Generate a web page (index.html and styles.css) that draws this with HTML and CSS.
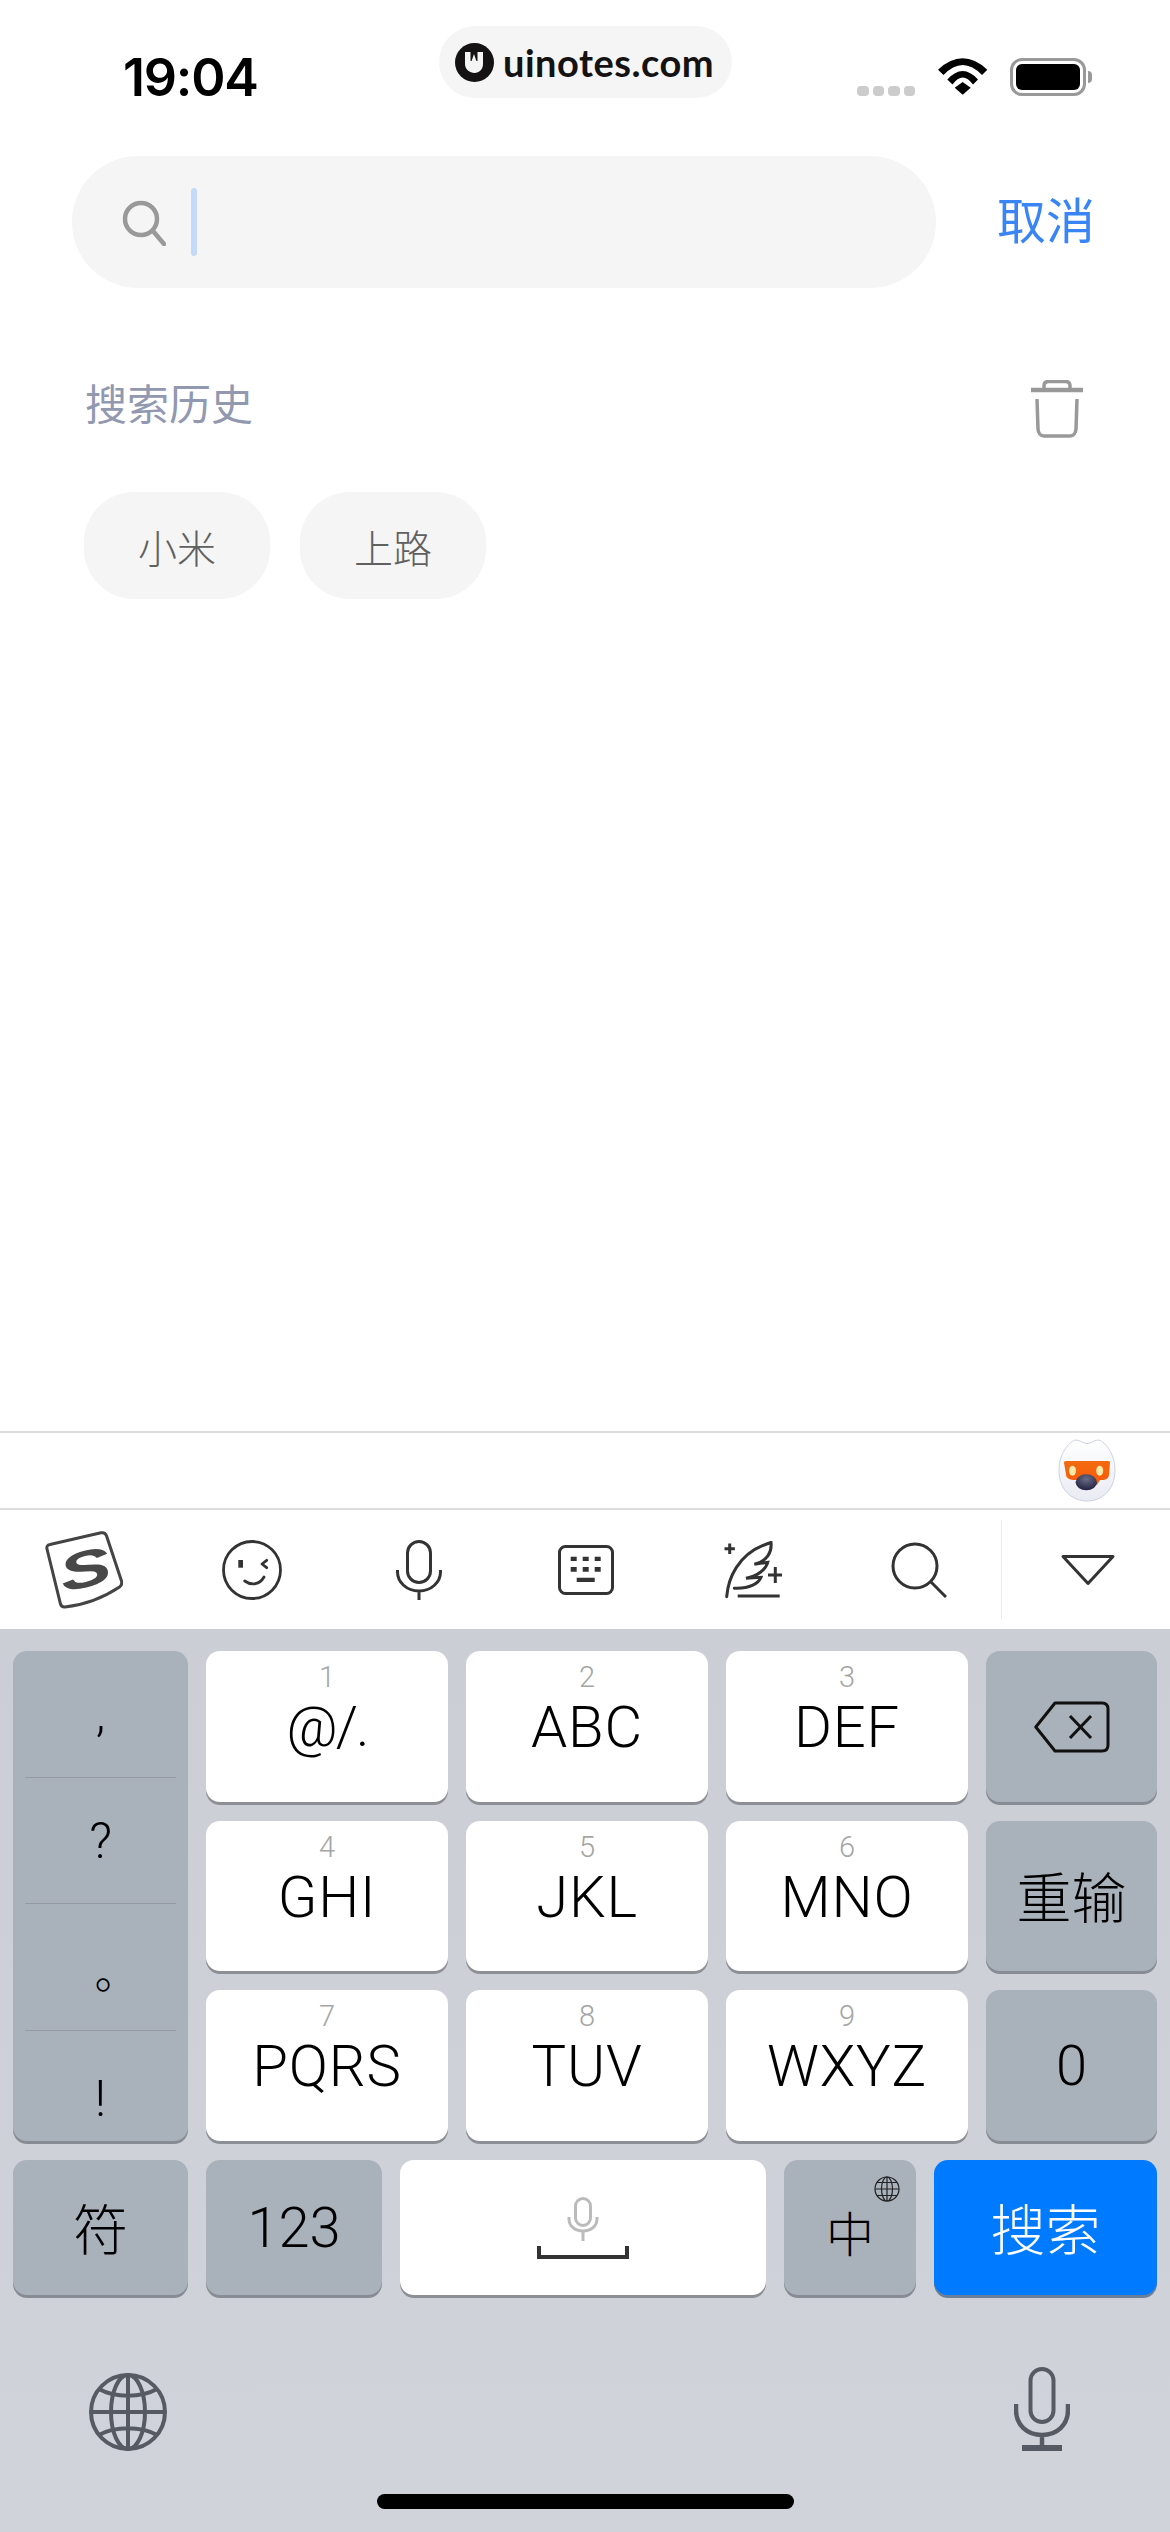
FILE: index.html
```html
<!DOCTYPE html>
<html>
<head>
  <title>Search</title>
  <meta charset="UTF-8">
  <meta name="viewport" content="width=device-width, initial-scale=1.0">
  <link rel="stylesheet" href="styles.css">
</head>
<body>
  <div class="page">
    <div class="status-bar">
      <div class="time">19:04</div>
      <div class="watermark">
        <svg class="watermark-logo" viewBox="0 0 39 39">
          <circle cx="19.5" cy="19.5" r="19.5" fill="#141212"/>
          <path d="M10 9h5.500v8.500c0 .8 1 .8 1.300 0L19 11l2.200 6.500c.3.800 1.300.8 1.300 0V9H28v12c0 5.500-3.800 9-8.500 9S10 26.500 10 21z" fill="#f5f5f5"/>
        </svg>
        <span>uinotes.com</span>
      </div>
      <div class="status-icons">
        <div class="signal-dots"><i></i><i></i><i></i><i></i></div>
        <svg class="wifi" viewBox="0 0 50 38">
          <path d="M0 11.700Q24.700-11 49.300 11.700L44 17Q24.700-3 5.500 17z" fill="#000"/>
          <path d="M9.300 21.500Q24.700 4.500 40 21.500L35 26.500Q24.700 12.500 14.500 26.500z" fill="#000"/>
          <path d="M16.700 29.700L24.700 24l8 5.700-8 7z" fill="#000"/>
        </svg>
        <div class="battery"><div class="battery-fill"></div></div>
        <div class="battery-nub"></div>
      </div>
    </div>

    <div class="search-row">
      <div class="search-box">
        <svg class="search-icon" viewBox="0 0 44 46">
          <circle cx="19" cy="19" r="16" fill="none" stroke="#999" stroke-width="4.500"/>
          <path d="M31 31l11 13" fill="none" stroke="#999" stroke-width="4.500" stroke-linecap="round"/>
        </svg>
        <div class="caret"></div>
      </div>
      <div class="cancel">取消</div>
    </div>

    <div class="history-head">
      <div class="history-title">搜索历史</div>
      <svg class="trash" viewBox="0 0 52 58">
        <path d="M13 9V6c0-3 1.500-4.500 4.500-4.500h17c3 0 4.500 1.500 4.500 4.500v3" fill="none" stroke="#999" stroke-width="3.500"/>
        <path d="M0 10h52" stroke="#999" stroke-width="4.500"/>
        <path d="M6 19l1 30c.2 4 2.500 7 6 7h26c3.500 0 5.800-3 6-7l1-30" fill="none" stroke="#999" stroke-width="3.500"/>
      </svg>
    </div>

    <div class="chips">
      <div class="chip">小米</div>
      <div class="chip">上路</div>
    </div>

    <div class="spacer"></div>

    <div class="candidate-bar">
      <svg class="mascot" viewBox="0 0 58 64">
        <defs>
          <linearGradient id="mascotFace" x1="0" y1="0" x2="0" y2="1">
            <stop offset="0" stop-color="#ffffff"/>
            <stop offset="1" stop-color="#e9ebf3"/>
          </linearGradient>
          <linearGradient id="mascotMask" x1="0" y1="0" x2="0" y2="1">
            <stop offset="0" stop-color="#f26a10"/>
            <stop offset="1" stop-color="#fb5a0a"/>
          </linearGradient>
          <radialGradient id="mascotNose" cx="0.5" cy="0.3" r="0.7">
            <stop offset="0" stop-color="#6a6c88"/>
            <stop offset="1" stop-color="#20223f"/>
          </radialGradient>
        </defs>
        <path d="M18 1c4 0 7 3.500 11 3.500S36 1 40 1c5 0 17 12 17 30 0 20-13 31-28 31S1 51 1 31C1 13 13 1 18 1z" fill="url(#mascotFace)" stroke="#cdd1e0"/>
        <path d="M8 22h42c2 0 2 1 2 2l-1 12c-.3 3-3 5-7 5h-2l-3 5-6-5H18c-7 0-10-2-10-6L6 24c0-1 0-2 2-2z" fill="url(#mascotMask)"/>
        <ellipse cx="14.500" cy="31.700" rx="3.500" ry="5" fill="#ffe9a8"/>
        <ellipse cx="41.700" cy="31.700" rx="3.500" ry="5" fill="#ffe9a8"/>
        <ellipse cx="28.300" cy="43.300" rx="10.700" ry="8" fill="url(#mascotNose)"/>
      </svg>
    </div>

    <div class="tool-bar">
      <div class="tool">
        <svg viewBox="0 0 78 78" width="78" height="78">
          <path d="M5 13.500L56 1.800c3-.6 4.500.2 5.500 3L76.500 50c.8 2.800 0 4.500-2 6C58 67 38 74 20 76c-2.500.2-3.800-.6-4.500-3L2 18c-.6-2.500.5-4 3-4.500z" fill="none" stroke="#444" stroke-width="3"/>
          <text class="logo-letter" text-anchor="middle" transform="translate(40 38) rotate(-14) scale(1.3 .85)" y="21">S</text>
        </svg>
      </div>
      <div class="tool">
        <svg viewBox="0 0 60 60" width="60" height="60">
          <circle cx="30" cy="30" r="28.500" fill="none" stroke="#333" stroke-width="2.800"/>
          <path d="M16.300 20H21v7.700h-4.700z" fill="#333"/>
          <path d="M44.700 20.300L40 24l4.700 3.700M22.700 41c7 5 15 3.500 19.300-4" fill="none" stroke="#333" stroke-width="2.800" stroke-linecap="round" stroke-linejoin="round"/>
        </svg>
      </div>
      <div class="tool">
        <svg viewBox="0 0 46 60" width="46" height="60">
          <rect x="11.500" y="1.500" width="23" height="41" rx="11.500" fill="none" stroke="#333" stroke-width="3"/>
          <path d="M1.500 30v2c0 10 9 19 21.500 19s21.500-9 21.500-19v-2M23 51v9" fill="none" stroke="#333" stroke-width="3"/>
        </svg>
      </div>
      <div class="tool">
        <svg viewBox="0 0 56 50" width="56" height="50">
          <rect x="1.500" y="1.500" width="53" height="47" rx="6" fill="none" stroke="#333" stroke-width="3"/>
          <path d="M12.700 11.700h6V16h-6zM24.700 11.700h6V16h-6zM36.700 11.700h6V16h-6zM12.700 22h6v4.700h-6zM24.700 22h6v4.700h-6zM36.700 22h6v4.700h-6zM18.700 32.700h18V37h-18z" fill="#333"/>
        </svg>
      </div>
      <div class="tool">
        <svg viewBox="0 0 58 58" width="58" height="58">
          <path d="M2.700 55.700C4 40 12 12 47 1.500 48 10 44 20 30.300 23.300L43.700 21.300C42 28 34 35 22 37.300L37 36.300C35 42 26 48 10.300 47.300" fill="none" stroke="#333" stroke-width="3" stroke-linecap="round" stroke-linejoin="miter"/>
          <path d="M13.700 55h42M5.700 2.500v10.400M.5 7.700h10.400M51.300 26v16M44 34h14" fill="none" stroke="#333" stroke-width="3"/>
        </svg>
      </div>
      <div class="tool">
        <svg viewBox="0 0 56 56" width="56" height="56">
          <circle cx="24" cy="24" r="22" fill="none" stroke="#333" stroke-width="3"/>
          <path d="M40 40l15 15" fill="none" stroke="#333" stroke-width="3"/>
        </svg>
      </div>
      <div class="tool tool-collapse">
        <svg viewBox="0 0 56 32" width="56" height="32">
          <path d="M3 2.500h50L28 29.500z" fill="none" stroke="#333" stroke-width="3" stroke-linejoin="round"/>
        </svg>
      </div>
    </div>

    <div class="keyboard">
      <div class="key-grid">
        <div class="key key-dark punct-key">
          <div class="punct">,</div>
          <div class="punct">?</div>
          <div class="punct punct-stop">。</div>
          <div class="punct punct-last">!</div>
        </div>
        <div class="key"><span class="digit">1</span><span class="letters letters-tight">@/.</span></div>
        <div class="key"><span class="digit">2</span><span class="letters">ABC</span></div>
        <div class="key"><span class="digit">3</span><span class="letters">DEF</span></div>
        <div class="key key-dark">
          <svg viewBox="0 0 76 52" width="76" height="52">
            <path d="M1.800 26L21 2h47c4 0 6 2 6 6v36c0 4-2 6-6 6H21z" fill="none" stroke="#111" stroke-width="3" stroke-linejoin="round"/>
            <path d="M36 15l21 22M57 15L36 37" fill="none" stroke="#111" stroke-width="3"/>
          </svg>
        </div>
        <div class="key"><span class="digit">4</span><span class="letters">GHI</span></div>
        <div class="key"><span class="digit">5</span><span class="letters">JKL</span></div>
        <div class="key"><span class="digit">6</span><span class="letters">MNO</span></div>
        <div class="key key-dark key-cjk">重输</div>
        <div class="key"><span class="digit">7</span><span class="letters">PQRS</span></div>
        <div class="key"><span class="digit">8</span><span class="letters">TUV</span></div>
        <div class="key"><span class="digit">9</span><span class="letters">WXYZ</span></div>
        <div class="key key-dark key-text">0</div>
      </div>

      <div class="key-row">
        <div class="key key-dark key-cjk key-sym">符</div>
        <div class="key key-dark key-text key-num">123</div>
        <div class="key key-space">
          <svg viewBox="0 0 92 64" width="92" height="64">
            <rect x="38.500" y="1.500" width="15" height="27" rx="7.500" fill="none" stroke="#bbb" stroke-width="3"/>
            <path d="M32 20v2c0 7 6 12 14 12s14-5 14-12v-2M46 34v10" fill="none" stroke="#bbb" stroke-width="3"/>
            <path d="M2 49v11h88V49" fill="none" stroke="#333" stroke-width="4"/>
          </svg>
        </div>
        <div class="key key-dark key-lang">
          中
          <svg class="lang-globe" viewBox="0 0 26 26">
            <g fill="none" stroke="#222" stroke-width="1.200">
              <circle cx="13" cy="13" r="12"/>
              <ellipse cx="13" cy="13" rx="5.500" ry="12"/>
              <path d="M13 1v24M1 13h24M3 6.500h20M3 19.500h20"/>
            </g>
          </svg>
        </div>
        <div class="key key-search">搜索</div>
      </div>

      <div class="system-row">
        <svg class="system-globe" viewBox="0 0 80 80" width="80" height="80">
          <g fill="none" stroke="#565b63" stroke-width="4">
            <circle cx="40" cy="40" r="37"/>
            <ellipse cx="40" cy="40" rx="17" ry="37"/>
            <path d="M40 3v74M3 40h74M11 17c16 9 42 9 58 0M11 63c16-9 42-9 58 0"/>
          </g>
        </svg>
        <svg viewBox="0 0 56 84" width="56" height="84">
          <rect x="16.500" y="2" width="23" height="53" rx="11.500" fill="none" stroke="#565b63" stroke-width="4"/>
          <path d="M2 37v6c0 15 11 25 26 25s26-10 26-25v-6M28 68v12" fill="none" stroke="#565b63" stroke-width="4.500"/>
          <path d="M8 81h40" fill="none" stroke="#565b63" stroke-width="6"/>
        </svg>
      </div>

      <div class="home-bar"></div>
    </div>
  </div>
</body>
</html>
```

FILE: styles.css
```css
* {
  box-sizing: border-box;
}
body {
  margin: 0;
  background: #fff;
  font-family: "Noto Sans CJK SC", Roboto, sans-serif;
}
svg {
  display: block;
}
.page {
  position: relative;
  width: 1170px;
  height: 2532px;
  display: flex;
  flex-direction: column;
  overflow: hidden;
}

/* status bar */
.status-bar {
  height: 156px;
  flex-shrink: 0;
  display: flex;
  justify-content: space-between;
  align-items: flex-start;
  padding: 48px 78px 0 123px;
}
.time {
  font-family: Inter, sans-serif;
  font-size: 52px;
  font-weight: 600;
  line-height: 60px;
  letter-spacing: -1.2px;
  color: #000;
}
.watermark {
  position: absolute;
  top: 26px;
  left: 439px;
  width: 293px;
  height: 72px;
  display: flex;
  align-items: center;
  gap: 9px;
  padding-left: 16px;
  background: #f5f5f5;
  border-radius: 36px;
  font-family: Lato, sans-serif;
  font-size: 38px;
  font-weight: 700;
  letter-spacing: .5px;
  color: #141212;
}
.watermark-logo {
  width: 39px;
  height: 39px;
}
.status-icons {
  display: flex;
  align-items: flex-end;
  margin-top: 10px;
}
.signal-dots {
  display: flex;
  gap: 4px;
  margin-right: 23px;
}
.signal-dots i {
  width: 11.500px;
  height: 10px;
  border-radius: 4px;
  background: #ccc;
}
.wifi {
  width: 50px;
  height: 38px;
  margin-right: 22px;
}
.battery {
  width: 76px;
  height: 38px;
  padding: 3px;
  border: 3px solid #999;
  border-radius: 12px;
}
.battery-fill {
  width: 100%;
  height: 100%;
  background: #000;
  border-radius: 6px;
}
.battery-nub {
  width: 4px;
  height: 12px;
  margin-left: 2px;
  margin-bottom: 13px;
  background: #999;
  border-radius: 0 6px 6px 0;
}

/* search */
.search-row {
  height: 132px;
  flex-shrink: 0;
  display: flex;
  justify-content: space-between;
  align-items: center;
  padding: 0 75px 0 72px;
}
.search-box {
  width: 864px;
  height: 132px;
  display: flex;
  align-items: center;
  gap: 25px;
  padding-left: 50px;
  background: #f5f5f5;
  border-radius: 66px;
}
.search-icon {
  width: 44px;
  height: 46px;
  margin-top: 2px;
}
.caret {
  width: 6px;
  height: 68px;
  background: #c5daf6;
  border-radius: 3px;
}
.cancel {
  margin-top: -8px;
  font-size: 49px;
  font-weight: 400;
  line-height: 60px;
  color: #3a85f5;
}

/* history */
.history-head {
  flex-shrink: 0;
  display: flex;
  justify-content: space-between;
  align-items: center;
  margin-top: 92px;
  padding: 0 87px 0 85px;
}
.history-title {
  margin-bottom: 14px;
  font-size: 42px;
  font-weight: 400;
  line-height: 44px;
  color: #9298b0;
}
.trash {
  width: 52px;
  height: 58px;
}
.chips {
  flex-shrink: 0;
  display: flex;
  gap: 30px;
  margin-top: 54px;
  padding-left: 84px;
}
.chip {
  width: 186px;
  height: 107px;
  display: flex;
  justify-content: center;
  align-items: center;
  background: #f5f5f5;
  border-radius: 50px;
  font-size: 39px;
  font-weight: 300;
  color: #606060;
}
.spacer {
  flex: 1;
}

/* keyboard toolbar */
.candidate-bar {
  height: 79px;
  flex-shrink: 0;
  display: flex;
  justify-content: flex-end;
  align-items: center;
  padding-right: 54px;
  border-top: 2px solid #dcdcdc;
  border-bottom: 2px solid #dcdcdc;
}
.mascot {
  width: 58px;
  height: 64px;
}
.tool-bar {
  height: 119px;
  flex-shrink: 0;
  display: grid;
  grid-template-columns: 168px 167px 167px 167px 167px 165px 169px;
  align-items: center;
  justify-items: center;
}
.tool-collapse {
  align-self: stretch;
  display: flex;
  align-items: center;
  justify-content: center;
  width: 100%;
  margin: 10px 0;
  padding-left: 3px;
  border-left: 1px solid #ececec;
}
.logo-letter {
  font-family: "Liberation Sans", sans-serif;
  font-size: 60px;
  font-weight: 700;
  font-style: italic;
  fill: #484848;
}

/* keys */
.keyboard {
  height: 903px;
  flex-shrink: 0;
  display: flex;
  flex-direction: column;
  padding: 22px 13px 0;
  background: linear-gradient(#cbcfd5, #d0d3da);
}
.key-grid {
  display: grid;
  grid-template-columns: 175px 242px 242px 242px 171px;
  grid-template-rows: 151px 150px 151px;
  gap: 19px 18px;
}
.key {
  display: flex;
  flex-direction: column;
  align-items: center;
  padding-top: 10px;
  background: #fff;
  border-radius: 14px;
  box-shadow: 0 3px 0 #8c9095;
  font-family: Roboto, sans-serif;
  color: #000;
}
.key-dark {
  justify-content: center;
  padding-top: 0;
  background: #a9b1bb;
  box-shadow: 0 3px 0 #878c94;
}
.digit {
  height: 32px;
  font-size: 29px;
  font-weight: 300;
  line-height: 32px;
  color: #a5a5a5;
}
.letters {
  font-size: 58px;
  font-weight: 300;
  line-height: 68px;
  letter-spacing: .8px;
}
.letters-tight {
  font-size: 56px;
  letter-spacing: -2px;
}
.punct-key {
  grid-row: span 3;
  justify-content: flex-start;
}
.punct {
  width: 151px;
  height: 127px;
  display: flex;
  justify-content: center;
  align-items: center;
  border-bottom: 1px solid #969ba3;
  font-size: 50px;
  font-weight: 300;
  line-height: 60px;
}
.punct-stop {
  padding: 6px 0 0 32px;
  font-family: "Noto Sans CJK SC", sans-serif;
  font-size: 44px;
}
.punct-last {
  height: 110px;
  padding-top: 26px;
  border-bottom: 0;
}
.key-cjk {
  padding-bottom: 4px;
  font-family: "Noto Sans CJK SC", sans-serif;
  font-size: 55px;
  font-weight: 300;
}
.key-text {
  font-size: 56px;
  font-weight: 300;
}
.key-row {
  display: flex;
  gap: 18px;
  height: 135px;
  margin-top: 19px;
}
.key-sym {
  width: 175px;
}
.key-num {
  width: 176px;
}
.key-space {
  width: 366px;
  padding-top: 37px;
}
.key-lang {
  position: relative;
  width: 132px;
  padding-top: 6px;
  font-family: "Noto Sans CJK SC", sans-serif;
  font-size: 48px;
  font-weight: 300;
}
.lang-globe {
  position: absolute;
  top: 16px;
  right: 16px;
  width: 26px;
  height: 26px;
}
.key-search {
  width: 223px;
  justify-content: center;
  padding-top: 0;
  padding-bottom: 4px;
  background: #007aff;
  box-shadow: 0 3px 0 #6a7f99;
  font-family: "Noto Sans CJK SC", sans-serif;
  font-size: 55px;
  font-weight: 300;
  color: #fff;
}
.system-row {
  display: flex;
  justify-content: space-between;
  align-items: flex-start;
  margin-top: 72px;
  padding: 0 87px 0 75px;
}
.system-globe {
  margin-top: 5px;
}
.home-bar {
  width: 417px;
  height: 15px;
  margin: 42px auto 0;
  background: #000;
  border-radius: 8px;
}
```
